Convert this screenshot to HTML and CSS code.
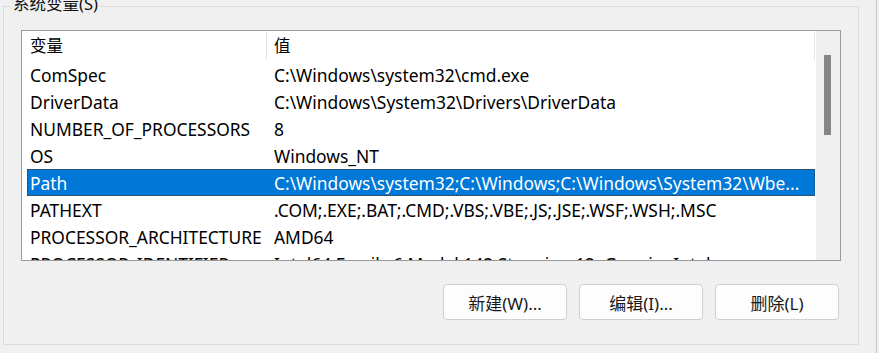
FILE: index.html
```html
<!DOCTYPE html>
<html lang="zh-CN">
<head>
<meta charset="utf-8">
<title>系统变量</title>
<link rel="stylesheet" href="styles.css">
</head>
<body>
<div class="window">
  <div class="group">
    <div class="legend">系统变量(S)</div>
    <div class="list">
      <div class="list-main">
        <div class="header">
          <div class="hcell hname">变量</div>
          <div class="hcell hvalue">值</div>
        </div>
        <div class="rows">
          <div class="row"><span class="c1">ComSpec</span><span class="c2">C:\Windows\system32\cmd.exe</span></div>
          <div class="row"><span class="c1">DriverData</span><span class="c2">C:\Windows\System32\Drivers\DriverData</span></div>
          <div class="row"><span class="c1">NUMBER_OF_PROCESSORS</span><span class="c2">8</span></div>
          <div class="row"><span class="c1">OS</span><span class="c2">Windows_NT</span></div>
          <div class="row selected"><span class="c1">Path</span><span class="c2">C:\Windows\system32;C:\Windows;C:\Windows\System32\Wbe...</span></div>
          <div class="row"><span class="c1">PATHEXT</span><span class="c2">.COM;.EXE;.BAT;.CMD;.VBS;.VBE;.JS;.JSE;.WSF;.WSH;.MSC</span></div>
          <div class="row"><span class="c1">PROCESSOR_ARCHITECTURE</span><span class="c2">AMD64</span></div>
          <div class="row"><span class="c1">PROCESSOR_IDENTIFIER</span><span class="c2">Intel64 Family 6 Model 142 Stepping 12, GenuineIntel</span></div>
        </div>
      </div>
      <div class="scrollbar"><div class="thumb"></div></div>
    </div>
    <div class="buttons">
      <button class="btn">新建(W)...</button>
      <button class="btn">编辑(I)...</button>
      <button class="btn">删除(L)</button>
    </div>
  </div>
</div>
</body>
</html>
```
FILE: styles.css
```css
* { box-sizing: border-box; }
html, body {
  margin: 0;
  padding: 0;
  background: #f0f0f0;
  overflow: hidden;
}
body {
  font-family: "Noto Sans", "Noto Sans CJK SC", sans-serif;
  font-size: 17px;
  color: #000;
}
.window {
  width: 877px;
  height: 353px;
  border-right: 1px solid #cacaca;
  padding: 6px 0 0 3px;
}
.group {
  position: relative;
  width: 856px;
  height: 339px;
  border: 1px solid #dcdcdc;
  padding: 23px 0 0 17px;
}
.legend {
  position: absolute;
  top: -13px;
  left: 7px;
  padding: 0 2px;
  line-height: 20px;
  background: #f0f0f0;
  font-size: 16.5px;
  color: #111;
}
.list {
  display: flex;
  width: 820px;
  height: 231px;
  border: 1px solid #9a9a9a;
  background: #fff;
}
.list-main {
  flex: 1;
  overflow: hidden;
}
.header {
  display: flex;
  height: 30px;
  padding-top: 1px;
  font-size: 16.5px;
}
.hcell {
  display: flex;
  align-items: center;
  height: 28px;
  line-height: 28px;
}
.hname {
  width: 245px;
  padding-left: 8px;
  border-right: 1px solid #e5e5e5;
}
.hvalue {
  width: 548px;
  padding-left: 7px;
  border-right: 1px solid #e5e5e5;
}
.rows {
  padding-left: 5px;
  height: 199px;
  overflow: hidden;
  font-size: 17.4px;
}
.row {
  display: flex;
  align-items: center;
  width: 788px;
  height: 27px;
  white-space: nowrap;
  overflow: hidden;
}
.c1 {
  width: 247px;
  flex: none;
  padding-left: 3px;
}
.c2 {
  flex: 1;
  overflow: hidden;
}
.selected {
  background: #0078d7;
  color: #fff;
  outline: 1px dotted rgba(40, 40, 40, 0.7);
  outline-offset: -1px;
}
.scrollbar {
  width: 24px;
  flex: none;
  background: #f0f0f0;
  padding: 24px 0 0 8px;
}
.thumb {
  width: 7px;
  height: 80px;
  background: #858585;
}
.buttons {
  display: flex;
  justify-content: flex-end;
  gap: 12px;
  width: 818px;
  margin-top: 23px;
}
.btn {
  width: 124px;
  height: 36px;
  border: 1px solid #d0d0d0;
  border-radius: 4px;
  background: #fdfdfd;
  font-family: "Noto Sans", "Noto Sans CJK SC", sans-serif;
  font-size: 17px;
  color: #1a1a1a;
  padding: 0;
}
```
